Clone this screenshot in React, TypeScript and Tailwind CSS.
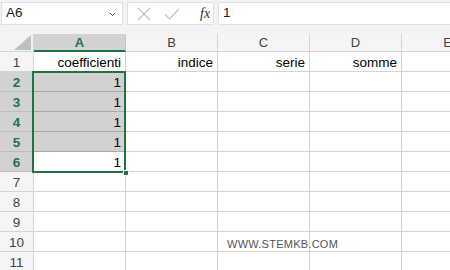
import React from 'react';

const cols = ['A', 'B', 'C', 'D', 'E'];
const rows = [1, 2, 3, 4, 5, 6, 7, 8, 9, 10, 11];
const selectedRows = [2, 3, 4, 5, 6];

const headerRow1 = ['coefficienti', 'indice', 'serie', 'somme', ''];

function cellText(r: number, c: number) {
  if (r === 1) return headerRow1[c];
  if (c === 0 && r >= 2 && r <= 6) return '1';
  return '';
}

export default function App() {
  return (
    <div
      className="relative w-[450px] h-[270px] overflow-hidden bg-white text-[#222]"
      style={{ fontFamily: '"Liberation Sans", Arial, sans-serif' }}
    >
      {/* formula bar */}
      <div className="h-[34px] bg-[#f3f3f3] flex items-start pt-[2px] pl-[1px]">
        <div className="w-[122px] h-[23px] bg-white border border-[#e0e0e0] flex items-center justify-between pl-[4px] pr-[6px]">
          <span className="text-[13.5px]">A6</span>
          <svg width="7" height="5" viewBox="0 0 7 5" className="mt-[1px]">
            <path d="M1 1 L3.5 3.5 L6 1" fill="none" stroke="#444" strokeWidth="1" />
          </svg>
        </div>
        <div className="ml-[4px] w-[87px] h-[23px] bg-white border border-[#e0e0e0] flex items-center">
          <svg width="14" height="14" viewBox="0 0 14 14" className="ml-[9px]">
            <path d="M1 1 L13 13 M13 1 L1 13" fill="none" stroke="#c2c2c2" strokeWidth="1.1" />
          </svg>
          <svg width="16" height="12" viewBox="0 0 16 12" className="ml-[13px]">
            <path d="M1 6.5 L5.5 11 L15 1" fill="none" stroke="#c2c2c2" strokeWidth="1.1" />
          </svg>
          <span
            className="ml-[20px] text-[14px] italic text-[#333]"
            style={{ fontFamily: '"Liberation Serif", "Times New Roman", serif' }}
          >
            fx
          </span>
        </div>
        <div className="ml-[4px] flex-1 h-[23px] bg-white border border-r-0 border-[#e0e0e0] flex items-center pl-[4px]">
          <span className="text-[13.5px]">1</span>
        </div>
      </div>

      {/* grid */}
      <div className="grid grid-cols-[34px_92px_92px_92px_92px_92px]">
        {/* corner */}
        <div className="h-[18px] bg-[#f3f3f3] border-r border-b border-[#d4d4d4] flex items-end justify-end pr-[2px] pb-[1px]">
          <svg width="17" height="15" viewBox="0 0 17 15">
            <path d="M17 0 L17 15 L0 15 Z" fill="#bfbfbf" />
          </svg>
        </div>
        {cols.map((c, i) => (
          <div
            key={c}
            className={
              i === 0
                ? 'h-[18px] bg-[#d2d2d2] border-r border-[#c6c6c6] border-b-2 border-b-[#217346] flex items-center justify-center pt-[1px] text-[13px] font-bold text-[#217346]'
                : 'h-[18px] bg-[#f5f5f5] border-r border-b border-[#d4d4d4] flex items-center justify-center pt-[1px] text-[13px] text-[#444]'
            }
          >
            {c}
          </div>
        ))}

        {rows.map((r) => {
          const sel = selectedRows.includes(r);
          return (
            <React.Fragment key={r}>
              <div
                className={
                  sel
                    ? 'h-[20px] bg-[#d2d2d2] border-r border-b border-[#bdbdbd] flex items-center justify-center pt-[3px] text-[13.5px] font-bold text-[#217346]'
                    : 'h-[20px] bg-[#f5f5f5] border-r border-b border-[#d4d4d4] flex items-center justify-center pt-[3px] text-[13.5px] text-[#444]'
                }
              >
                {r}
              </div>
              {cols.map((c, i) => {
                const shaded = i === 0 && r >= 2 && r <= 5;
                return (
                  <div
                    key={c}
                    className={
                      shaded
                        ? 'h-[20px] bg-[#d2d2d2] border-r border-b border-[#a9a9a9] flex items-center justify-end pr-[4px] pt-[3px] text-[13.5px] text-black'
                        : 'relative h-[20px] border-r border-b border-[#d4d4d4] flex items-center justify-end pr-[4px] pt-[3px] text-[13.5px] text-black'
                    }
                  >
                    {cellText(r, i)}
                    {r === 10 && i === 2 && (
                      <span className="absolute left-[9px] top-[4px] whitespace-nowrap text-[11px] tracking-[0.25px] text-[#555]">
                        WWW.STEMKB.COM
                      </span>
                    )}
                  </div>
                );
              })}
            </React.Fragment>
          );
        })}
      </div>

      {/* selection outline A2:A6 */}
      <div className="absolute left-[32px] top-[71px] w-[94px] h-[102px] border-2 border-[#217346] pointer-events-none" />
      <div className="absolute left-[123px] top-[170px] w-[6px] h-[6px] bg-[#217346] border border-white pointer-events-none" />
    </div>
  );
}
